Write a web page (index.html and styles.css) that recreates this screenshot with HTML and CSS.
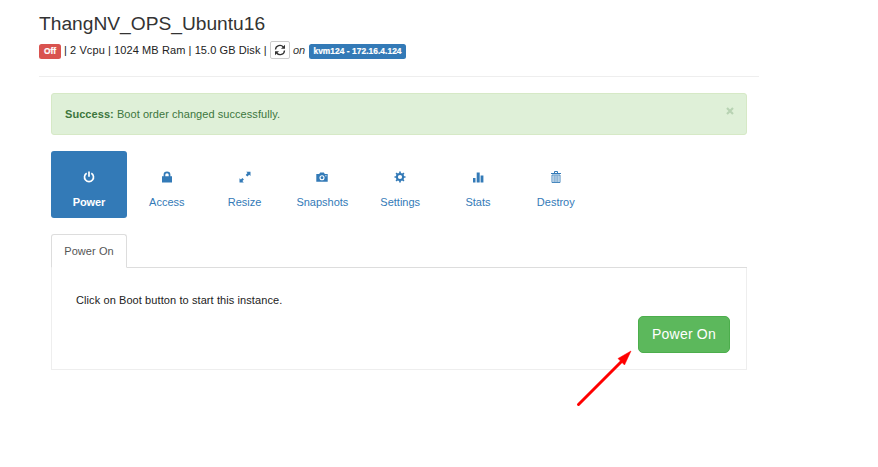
FILE: index.html
```
<!DOCTYPE html>
<html lang="en">
<head>
<meta charset="utf-8">
<title>ThangNV_OPS_Ubuntu16</title>
<link rel="stylesheet" href="styles.css">
</head>
<body>
<main class="page">
  <header class="head">
    <h1 class="title">ThangNV_OPS_Ubuntu16</h1>
    <div class="meta">
      <span class="label danger">Off</span>
      <span class="specs">| 2 Vcpu | 1024 MB Ram | 15.0 GB Disk |</span>
      <button class="refresh" aria-label="Refresh"><svg width="12" height="12" viewBox="0 0 12 12" fill="none" stroke="#333" stroke-width="1.3"><path d="M1.5 5.5C1.7 1.2 7 .2 9.3 3M10.5 6.500C10.300 10.800 5 11.800 2.700 9"/><path d="M11 .8v4H7zM1 11.200v-4h4z" fill="#333" stroke="none"/></svg></button>
      <em class="on">on</em>
      <span class="label primary">kvm124 - 172.16.4.124</span>
    </div>
  </header>
  <div class="content">
    <div class="alert"><span><strong>Success:</strong> Boot order changed successfully.</span><button class="close" aria-label="Close"><svg width="8" height="8" viewBox="0 0 8 8"><path d="M1 1l6 6M7 1L1 7" stroke="#b8d3b3" stroke-width="2.200"/></svg></button></div>
    <nav class="pills">
      <a class="pill active"><svg class="icon" viewBox="0 0 12 12" fill="none" stroke="currentColor" stroke-width="1.700"><path d="M3.700 2.200a4.500 4.500 0 1 0 4.600 0M6 .6v5.200"/></svg><span>Power</span></a>
      <a class="pill"><svg class="icon" viewBox="0 0 12 12"><path d="M1 5.200h1.600V3.500Q2.600.6 6 .6t3.400 2.900v1.700H11v6.300H1zM4.300 5.200h3.400V3.700Q7.700 2.200 6 2.200T4.300 3.700z" fill="currentColor" fill-rule="evenodd"/></svg><span>Access</span></a>
      <a class="pill"><svg class="icon" viewBox="0 0 12 12" fill="currentColor"><path d="M7.200.7h4.300V5L10.200 3.800 8.400 5.600 6.700 3.900 8.500 2.100zM.5 11.500V7.200L1.900 8.500l1.500-1.500 1.500 1.500L3.400 10l1.400 1.500z"/></svg><span>Resize</span></a>
      <a class="pill"><svg class="icon" viewBox="0 0 12 12"><path d="M.3 3h2.900l1-1.500h3.600l1 1.500h2.900v7.700H.3z" fill="currentColor"/><circle cx="6" cy="6.700" r="2" fill="none" stroke="#fff" stroke-width="1.100"/><path d="M9.300 4.300h1.200v1H9.300z" fill="#fff"/></svg><span>Snapshots</span></a>
      <a class="pill"><svg class="icon" viewBox="0 0 12 12" fill="none" stroke="currentColor"><circle cx="6" cy="6" r="3.100" stroke-width="2"/><path d="M6 .5v2M6 9.500v2M.5 6h2M9.500 6h2M2.100 2.100l1.400 1.400M8.500 8.500l1.400 1.400M2.100 9.900l1.400-1.400M8.500 3.500l1.400-1.400" stroke-width="1.700"/></svg><span>Settings</span></a>
      <a class="pill"><svg class="icon" viewBox="0 0 12 12" fill="currentColor"><path d="M1 7h2.500v4.500H1zM4.700 1.500h3v10h-3zM8.600 4.500h2.800v7H8.600z"/></svg><span>Stats</span></a>
      <a class="pill"><svg class="icon" viewBox="0 0 12 12" fill="none" stroke="currentColor"><path d="M1 2.500h10M4.500 2V.5h3V2"/><path d="M2 4h8v7.500H2zM4.100 4.500V11M6 4.500V11M7.900 4.500V11" stroke-width=".9"/></svg><span>Destroy</span></a>
    </nav>
    <div class="tabs"><a class="tab">Power On</a></div>
    <section class="panel">
      <p>Click on Boot button to start this instance.</p>
      <button class="power">Power On</button>
    </section>
  </div>
  <svg class="arrow" width="60" height="60" viewBox="0 0 60 60"><path d="M4.500 56.500L47 14" stroke="#f00" stroke-width="3" stroke-linecap="round"/><path d="M57 3L44 10.500L47 13.500L50.500 17z" fill="#f00" stroke="#f00" stroke-width=".5"/></svg>
</main>
</body>
</html>
```

FILE: styles.css
```
* { box-sizing: border-box; }
body {
  margin: 0;
  background: #fff;
  color: #333;
  font: 11px/16px "Liberation Sans", Arial, sans-serif;
}
button { font-family: inherit; }
.page { position: relative; width: 720px; min-height: 467px; margin-left: 39px; padding-top: 13px; }
.head { height: 64px; border-bottom: 1px solid #eee; }
.title { margin: 0; font-size: 19.2px; line-height: 21px; font-weight: 400; }
.meta { display: flex; align-items: center; height: 20px; margin-top: 6px; white-space: nowrap; }
.label {
  height: 15px;
  border-radius: 2.500px;
  color: #fff;
  font-size: 8.400px;
  line-height: 15px;
  font-weight: 700;
  text-align: center;
  -webkit-text-stroke: .2px #fff;
}
.danger { width: 22px; margin-top: 2px; background: #d9534f; }
.primary { width: 97px; margin: 2px 0 0 3px; background: #337ab7; letter-spacing: .05px; }
.specs { width: 203px; margin-left: 3px; color: #222; letter-spacing: .09px; }
.refresh {
  display: flex;
  align-items: center;
  justify-content: center;
  width: 20px;
  height: 18px;
  margin-left: 3px;
  padding: 0;
  border: 1px solid #ccc;
  border-radius: 2px;
  background: #fff;
}
.on { width: 13px; margin-left: 3px; }
.content { width: 696px; margin: 16px 0 0 12px; }
.alert {
  display: flex;
  justify-content: space-between;
  height: 42px;
  padding: 12px 12px 0 13px;
  border: 1px solid #d6e9c6;
  border-radius: 3px;
  background: #dff0d8;
  color: #3c763d;
  letter-spacing: .06px;
}
.close { width: 8px; height: 8px; margin-top: 1px; padding: 0; border: 0; background: none; }
.close svg { display: block; }
.pills { display: flex; gap: 1.800px; height: 67px; margin-top: 16px; }
.pill {
  display: flex;
  flex-direction: column;
  align-items: center;
  width: 76px;
  padding-top: 20px;
  border-radius: 3px;
  color: #337ab7;
}
.pill span { margin-top: 11px; }
.active { background: #337ab7; color: #fff; font-weight: 700; letter-spacing: -.15px; }
.icon { display: block; width: 12px; height: 12px; }
.tabs { height: 34px; margin-top: 16px; border-bottom: 1px solid #ddd; }
.tab {
  display: block;
  width: 76px;
  height: 34px;
  padding-top: 8px;
  border: 1px solid #ddd;
  border-bottom-color: #fff;
  border-radius: 3px 3px 0 0;
  background: #fff;
  color: #555;
  text-align: center;
  letter-spacing: .08px;
}
.panel {
  display: flex;
  flex-direction: column;
  height: 102px;
  padding: 24px 16px 0 24px;
  border: 1px solid #eee;
  border-top: 0;
}
.panel p { margin: 0; color: #222; letter-spacing: .09px; }
.power {
  align-self: flex-end;
  width: 92px;
  height: 37px;
  margin-top: 8px;
  padding: 0 0 2px;
  border: 1px solid #4cae4c;
  border-radius: 5px;
  background: #5cb85c;
  color: #fff;
  font-size: 14px;
  letter-spacing: .2px;
}
.arrow { position: absolute; left: 535px; top: 348px; }
```
